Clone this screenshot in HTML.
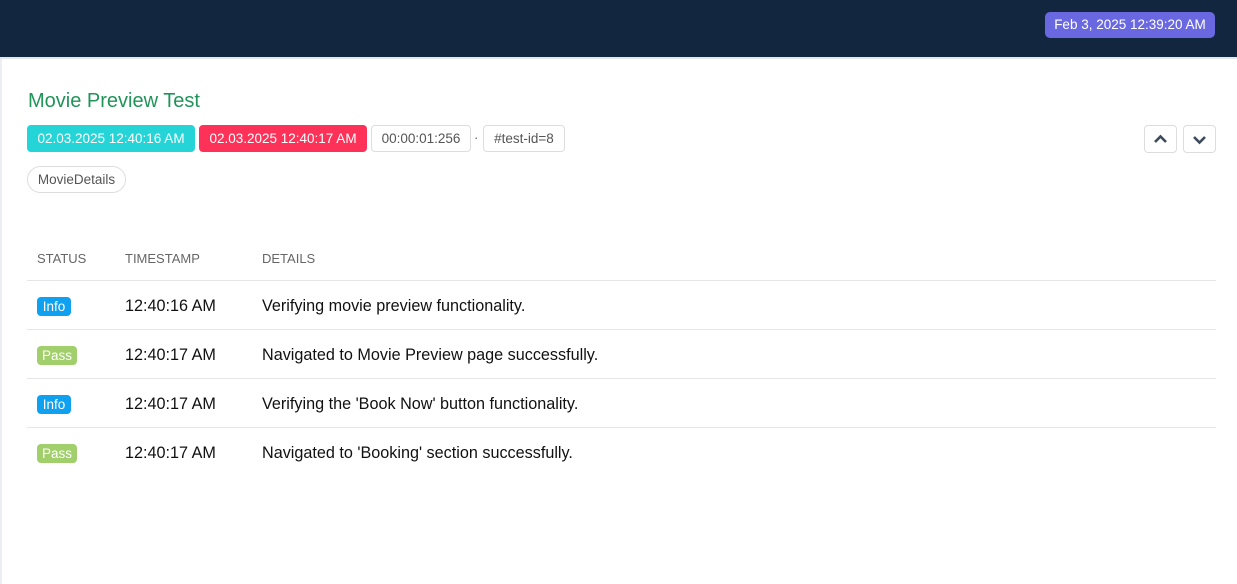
<!DOCTYPE html>
<html><head><meta charset="utf-8"><style>
*{box-sizing:border-box;margin:0;padding:0}
body{width:1237px;height:584px;overflow:hidden;background:#fff;font-family:"Liberation Sans",Roboto,sans-serif;position:relative}
.hdr{position:absolute;left:0;top:0;width:1237px;height:59px;background:#12263f;border-bottom:2px solid #e3e6ea}
.date{position:absolute;left:1045px;top:12px;width:170px;height:26px;background:#6a68e0;color:#fff;border-radius:5px;font-size:13.5px;line-height:26px;text-align:center}
.lb{position:absolute;left:0;top:59px;width:2px;height:525px;background:#eceef1}
h1{position:absolute;left:28px;top:90px;font-size:20px;font-weight:normal;color:#21945a}
.b{position:absolute;top:125px;height:27px;line-height:27px;font-size:13.5px;border-radius:4px;text-align:center}
.o{border:1px solid #ddd;color:#555;line-height:25px}
.btn{position:absolute;top:125px;width:33px;height:28px;border:1px solid #ddd;border-radius:4px}
.th{position:absolute;top:251px;font-size:13px;color:#666}
.line{position:absolute;left:27px;width:1189px;height:1px;background:#e6e6e6}
.r{position:absolute;font-size:16.2px;color:#111}
.s{position:absolute;left:37px;height:19px;line-height:19px;font-size:13.5px;color:#fff;border-radius:4px;text-align:center}
</style></head><body>
<div class="hdr"><div class="date">Feb 3, 2025 12:39:20 AM</div></div>
<div class="lb"></div>
<h1>Movie Preview Test</h1>
<div class="b" style="left:27px;width:168px;background:#25d4d6;color:#fff">02.03.2025 12:40:16 AM</div>
<div class="b" style="left:199px;width:168px;background:#fe3158;color:#fff">02.03.2025 12:40:17 AM</div>
<div class="b o" style="left:371px;width:100px">00:00:01:256</div>
<div style="position:absolute;left:474px;top:130px;font-size:13px;color:#555">·</div>
<div class="b o" style="left:483px;width:82px">#test-id=8</div>
<div class="b o" style="left:27px;top:166px;width:99px;border-radius:14px;line-height:25px">MovieDetails</div>
<div class="btn" style="left:1144px"><svg width="31" height="26"><path d="M10 16 L15.5 10.5 L21 16" fill="none" stroke="#3d4a5c" stroke-width="2.6"/></svg></div>
<div class="btn" style="left:1183px"><svg width="31" height="26"><path d="M10 11 L15.5 16.5 L21 11" fill="none" stroke="#3d4a5c" stroke-width="2.6"/></svg></div>
<div class="th" style="left:37px">STATUS</div>
<div class="th" style="left:125px">TIMESTAMP</div>
<div class="th" style="left:262px">DETAILS</div>
<div class="line" style="top:280px"></div>
<div class="line" style="top:329px"></div>
<div class="line" style="top:378px"></div>
<div class="line" style="top:427px"></div>
<div class="s" style="top:297px;width:34px;background:#0fa0f0">Info</div>
<div class="r" style="left:125px;top:297px">12:40:16 AM</div>
<div class="r" style="left:262px;top:297px">Verifying movie preview functionality.</div>
<div class="s" style="top:346px;width:40px;background:#a1cf6b">Pass</div>
<div class="r" style="left:125px;top:346px">12:40:17 AM</div>
<div class="r" style="left:262px;top:346px">Navigated to Movie Preview page successfully.</div>
<div class="s" style="top:395px;width:34px;background:#0fa0f0">Info</div>
<div class="r" style="left:125px;top:395px">12:40:17 AM</div>
<div class="r" style="left:262px;top:395px">Verifying the 'Book Now' button functionality.</div>
<div class="s" style="top:444px;width:40px;background:#a1cf6b">Pass</div>
<div class="r" style="left:125px;top:444px">12:40:17 AM</div>
<div class="r" style="left:262px;top:444px">Navigated to 'Booking' section successfully.</div>
</body></html>
